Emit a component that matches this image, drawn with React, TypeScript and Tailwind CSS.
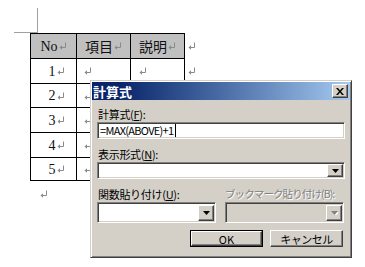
import React from 'react'

const ROWS = [
  { no: '1', h: 'h-[25px]' },
  { no: '2', h: 'h-[24px]' },
  { no: '3', h: 'h-[25px]' },
  { no: '4', h: 'h-[25px]' },
  { no: '5', h: 'h-[24px]' },
]

const UI = "font-['Noto_Sans_CJK_JP',sans-serif]"
const SUNKEN =
  'border border-t-[#808080] border-l-[#808080] border-r-white border-b-white shadow-[inset_1px_1px_0_#404040,inset_-1px_-1px_0_#d4d0c8]'
const RAISED =
  'border border-t-white border-l-white border-r-[#404040] border-b-[#404040] shadow-[inset_-1px_-1px_0_#808080]'

export default function App() {
  return (
    <div className="relative w-[365px] h-[267px] overflow-hidden bg-white">
      <div className="ml-[14px] mt-[8px] w-[24px] h-[25px] border-r border-b border-[#a0a0a0]" />

      <div className="ml-[30px] flex flex-col font-['Liberation_Serif','Noto_Sans_CJK_JP',serif] text-[#111]">
        <div className="flex h-[25px]">
          <div className="w-[46px] border-l border-t border-black bg-[#c0c0c0] flex items-center justify-center text-[14px]">
            No<Mark />
          </div>
          <div className="w-[54px] border-l border-t border-black bg-[#c0c0c0] flex items-center justify-center text-[14px] font-['Noto_Sans_CJK_JP',serif]">
            項目<Mark />
          </div>
          <div className="w-[55px] border-l border-r border-t border-black bg-[#c0c0c0] flex items-center justify-center text-[14px] font-['Noto_Sans_CJK_JP',serif]">
            説明<Mark />
          </div>
          <div className="pl-[2px] flex items-center"><Mark /></div>
        </div>
        {ROWS.map((r, i) => (
          <div key={r.no} className={`flex ${r.h}`}>
            <div className={`w-[46px] border-l border-t border-black flex items-center justify-center pl-[6px] text-[14px] ${i === ROWS.length - 1 ? 'border-b' : ''}`}>
              {r.no}<Mark />
            </div>
            <div className={`w-[54px] border-l border-t border-black flex items-center pl-[6px] ${i === ROWS.length - 1 ? 'border-b' : ''}`}>
              <Mark />
            </div>
            <div className={`w-[55px] border-l border-r border-t border-black flex items-center pl-[7px] ${i === ROWS.length - 1 ? 'border-b' : ''}`}>
              <Mark />
            </div>
            <div className="pl-[2px] flex items-center"><Mark /></div>
          </div>
        ))}
        <div className="ml-[9px] mt-[9px] flex"><Mark /></div>
      </div>

      <div
        className={`absolute left-[90px] top-[80px] w-[262px] h-[178px] p-[1px] bg-[#d4d0c8] border border-t-[#d4d0c8] border-l-[#d4d0c8] border-r-[#404040] border-b-[#404040] shadow-[inset_1px_1px_0_#fff,inset_-1px_-1px_0_#808080] ${UI} text-black`}
      >
        <div className="flex h-[18px] items-center justify-between pl-[1px] pr-[2px] bg-linear-to-r from-[#0a246a] from-10% to-[#a6caf0]">
          <span className="text-[13px] font-bold text-white leading-none">計算式</span>
          <div className={`w-[16px] h-[14px] bg-[#d4d0c8] flex items-center justify-center ${RAISED}`}>
            <svg width="8" height="7" viewBox="0 0 8 7">
              <path d="M0 0h2l2 2.5L6 0h2L5 3.5 8 7H6L4 4.5 2 7H0l3-3.5z" fill="#000" />
            </svg>
          </div>
        </div>

        <div className="flex flex-col px-[5px] text-[11px] tracking-[-0.3px] leading-[14px]">
          <div className="mt-[7px] h-[14px] pl-[1px]">
            計算式(<u>F</u>):
          </div>
          <div className={`mt-[1px] h-[17px] bg-white flex items-center pl-[2px] ${SUNKEN}`}>
            <span className="text-[11px] tracking-[-0.7px] leading-none">=MAX(ABOVE)+1</span>
            <span className="ml-[2px] h-[13px] border-l border-black" />
          </div>

          <div className="mt-[8px] h-[14px] pl-[1px]">
            表示形式(<u>N</u>):
          </div>
          <div className={`mt-[1px] h-[17px] bg-white flex justify-end items-stretch p-[1px] ${SUNKEN}`}>
            <DropButton />
          </div>

          <div className="mt-[8px] h-[14px] flex whitespace-nowrap">
            <div className="w-[128px] pl-[1px]">関数貼り付け(<u>U</u>):</div>
            <div className="text-[10.5px] text-[#808080] tracking-[-0.9px] [text-shadow:1px_1px_0_#fff]">ブックマーク貼り付け(B):</div>
          </div>
          <div className="mt-[1px] flex gap-[9px]">
            <div className={`w-[119px] h-[21px] bg-white flex justify-end items-center pr-[1px] ${SUNKEN}`}>
              <div className="h-[16px] flex"><DropButton /></div>
            </div>
            <div className={`w-[119px] h-[21px] bg-[#d4d0c8] flex justify-end items-center pr-[1px] ${SUNKEN}`}>
              <div className="h-[16px] flex"><DropButton disabled /></div>
            </div>
          </div>

          <div className="mt-[7px] flex justify-end gap-[7px] pr-[2px] tracking-normal">
            <div className="w-[73px] h-[17px] border border-black">
              <div className={`h-full flex items-center justify-center ${RAISED}`}>OK</div>
            </div>
            <div className={`w-[73px] h-[17px] flex items-center justify-center tracking-[-0.5px] ${RAISED}`}>
              キャンセル
            </div>
          </div>
        </div>
      </div>
    </div>
  )
}

function Mark() {
  return (
    <svg width="8" height="8" viewBox="0 0 8 8" className="shrink-0 ml-[1px]">
      <path d="M6.5 0.5v5h-5" stroke="#8a8a8a" strokeWidth="1" fill="none" />
      <path d="M0.5 5.5l2.5-2.2v4.4z" fill="#8a8a8a" />
    </svg>
  )
}

function DropButton({ disabled = false }: { disabled?: boolean }) {
  return (
    <div className={`w-[16px] bg-[#d4d0c8] flex items-center justify-center ${RAISED}`}>
      <svg width="7" height="4" viewBox="0 0 7 4">
        {disabled && <path d="M1 1h7l-3.5 4z" fill="#fff" />}
        <path d="M0 0h7L3.5 4z" fill={disabled ? '#808080' : '#000'} />
      </svg>
    </div>
  )
}
